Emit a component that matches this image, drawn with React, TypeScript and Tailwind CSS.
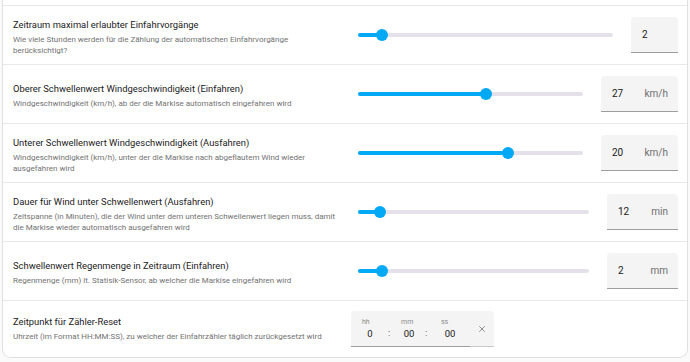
import { X } from 'lucide-react';

type Row = {
  title: string;
  desc: string[];
  value: string;
  unit?: string;
  pct: number;
  boxW: string;
};

const rows: Row[] = [
  {
    title: 'Zeitraum maximal erlaubter Einfahrvorgänge',
    desc: ['Wie viele Stunden werden für die Zählung der automatischen Einfahrvorgänge', 'berücksichtigt?'],
    value: '2',
    pct: 9.3,
    boxW: 'w-[47px]',
  },
  {
    title: 'Oberer Schwellenwert Windgeschwindigkeit (Einfahren)',
    desc: ['Windgeschwindigkeit (km/h), ab der die Markise automatisch eingefahren wird'],
    value: '27',
    unit: 'km/h',
    pct: 56.8,
    boxW: 'w-[77px]',
  },
  {
    title: 'Unterer Schwellenwert Windgeschwindigkeit (Ausfahren)',
    desc: ['Windgeschwindigkeit (km/h), unter der die Markise nach abgeflautem Wind wieder', 'ausgefahren wird'],
    value: '20',
    unit: 'km/h',
    pct: 66.5,
    boxW: 'w-[77px]',
  },
  {
    title: 'Dauer für Wind unter Schwellenwert (Ausfahren)',
    desc: [
      'Zeitspanne (in Minuten), die der Wind unter dem unteren Schwellenwert liegen muss, damit',
      'die Markise wieder automatisch ausgefahren wird',
    ],
    value: '12',
    unit: 'min',
    pct: 9.5,
    boxW: 'w-[71px]',
  },
  {
    title: 'Schwellenwert Regenmenge in Zeitraum (Einfahren)',
    desc: ['Regenmenge (mm) lt. Statisik-Sensor, ab welcher die Markise eingefahren wird'],
    value: '2',
    unit: 'mm',
    pct: 10.3,
    boxW: 'w-[71px]',
  },
];

const Info = ({ title, desc, shift = true }: { title: string; desc: string[]; shift?: boolean }) => (
  <div className={`w-[320px] shrink-0 ${shift ? 'mt-[5px]' : ''}`}>
    <div className="text-[9.4px] leading-[12px] text-[#212121] whitespace-nowrap">{title}</div>
    <div className="mt-[4px] text-[8px] leading-[10.5px] text-[#727272] whitespace-nowrap">
      {desc.map((line) => (
        <div key={line}>{line}</div>
      ))}
    </div>
  </div>
);

const Slider = ({ pct }: { pct: number }) => (
  <div className="relative flex-1 ml-[25px] mr-[18px] h-[12px] flex items-center">
    <div className="w-full h-[4px] rounded-full bg-[#e4e1ea]" />
    <div className="absolute left-0 h-[4px] rounded-full bg-[#03a9f4]" style={{ width: `${pct}%` }} />
    <div
      className="absolute w-[12px] h-[12px] -ml-[6px] rounded-full bg-[#03a9f4]"
      style={{ left: `${pct}%` }}
    />
  </div>
);

const TimeField = ({ label, value, w }: { label: string; value: string; w: string }) => (
  <div className={`flex flex-col ${w}`}>
    <span className="text-[7px] leading-[9px] text-[#8a8a8a]">{label}</span>
    <span className="mt-[1px] text-[9.5px] leading-[12px] text-[#212121] text-center">{value}</span>
  </div>
);

export default function App() {
  return (
    <div className="w-[690px] h-[362px] overflow-hidden bg-[#fafafa] font-['Roboto',sans-serif]">
      <div className="ml-[2px] w-[686px] bg-white border-x border-b border-[#e0e0e0] rounded-b-[9px]">
        <div className="h-[6px] border-b border-[#e8e8e8]" />
        {rows.map((r) => (
          <div
            key={r.title}
            className="h-[59px] flex items-center pl-[10px] pr-[9px] border-b border-[#e8e8e8]"
          >
            <Info title={r.title} desc={r.desc} />
            <Slider pct={r.pct} />
            <div
              className={`${r.boxW} h-[36px] shrink-0 flex items-center justify-between pl-[11px] pr-[10px] bg-[#f4f4f4] rounded-t-[4px] border-b border-[#9e9e9e] text-[10px]`}
            >
              <span className="text-[#212121]">{r.value}</span>
              {r.unit && <span className="text-[#6f6f6f]">{r.unit}</span>}
            </div>
          </div>
        ))}
        <div className="h-[56px] flex items-center pl-[10px] pr-[9px]">
          <Info
            shift={false}
            title="Zeitpunkt für Zähler-Reset"
            desc={['Uhrzeit (im Format HH:MM:SS), zu welcher der Einfahrzähler täglich zurückgesetzt wird']}
          />
          <div className="ml-[18px] w-[143px] h-[36px] flex items-center bg-[#f4f4f4] rounded-t-[4px]">
            <div className="flex items-center h-full flex-1 pl-[11px] border-b border-[#9e9e9e]">
              <TimeField label="hh" value="0" w="w-[16px]" />
              <span className="mt-[10px] w-[23px] pl-[10px] text-[9.5px] text-[#555]">:</span>
              <TimeField label="mm" value="00" w="w-[16px]" />
              <span className="mt-[10px] w-[24px] pl-[8px] text-[9.5px] text-[#555]">:</span>
              <TimeField label="ss" value="00" w="w-[18px]" />
            </div>
            <div className="h-full w-[24px] flex items-center justify-center border-b border-[#c8c8c8]">
              <X className="w-[10px] h-[10px] text-[#555]" strokeWidth={1.5} />
            </div>
          </div>
        </div>
      </div>
    </div>
  );
}
